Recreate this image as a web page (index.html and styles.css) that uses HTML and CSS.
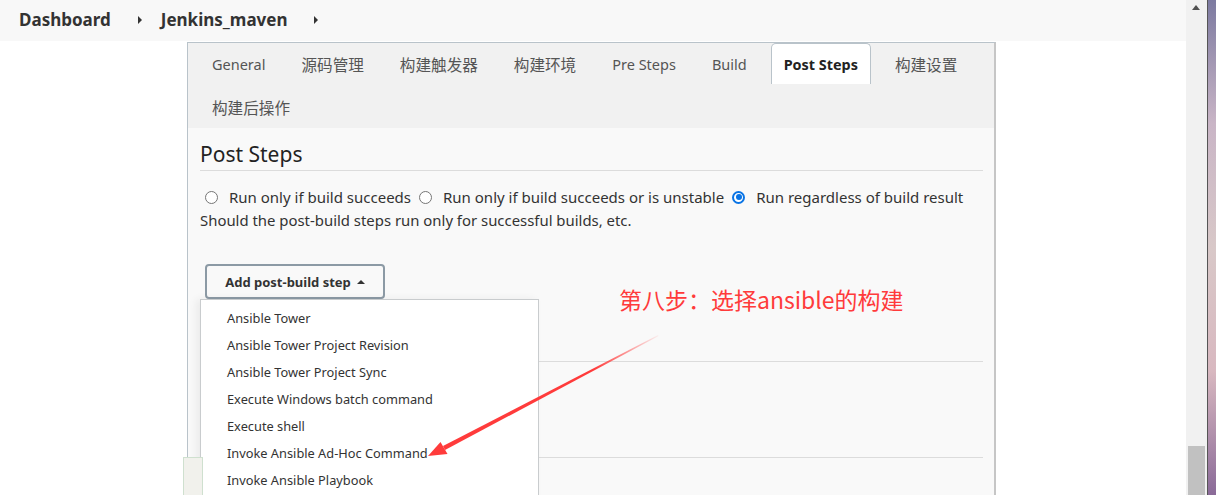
FILE: index.html
```html
<!DOCTYPE html>
<html>
<head>
<meta charset="utf-8">
<link rel="stylesheet" href="styles.css">
</head>
<body>
<div class="screen">
  <div class="main">
    <div class="header">
      <span class="crumb">Dashboard</span>
      <span class="caret"></span>
      <span class="crumb">Jenkins_maven</span>
      <span class="caret"></span>
    </div>
    <div class="body">
      <div class="panel">
        <div class="tabs">
          <div class="tab">General</div>
          <div class="tab cjk">源码管理</div>
          <div class="tab cjk">构建触发器</div>
          <div class="tab cjk">构建环境</div>
          <div class="tab">Pre Steps</div>
          <div class="tab">Build</div>
          <div class="tab active">Post Steps</div>
          <div class="tab cjk">构建设置</div>
          <div class="tab cjk">构建后操作</div>
        </div>
        <div class="content">
          <h2 class="section-title">Post Steps</h2>
          <div class="radios">
            <label class="radio"><span class="dot"></span>Run only if build succeeds</label>
            <label class="radio"><span class="dot"></span>Run only if build succeeds or is unstable</label>
            <label class="radio"><span class="dot on"></span>Run regardless of build result</label>
          </div>
          <div class="help">Should the post-build steps run only for successful builds, etc.</div>
          <div class="btn-row">
            <button class="add-btn">Add post-build step <span class="up"></span></button>
          </div>
          <div class="sep sep1"></div>
          <div class="sep sep2"></div>

          <div class="menu">
            <div class="item">Ansible Tower</div>
            <div class="item">Ansible Tower Project Revision</div>
            <div class="item">Ansible Tower Project Sync</div>
            <div class="item">Execute Windows batch command</div>
            <div class="item">Execute shell</div>
            <div class="item">Invoke Ansible Ad-Hoc Command</div>
            <div class="item">Invoke Ansible Playbook</div>
          </div>
        </div>
      </div>
      <div class="side-box"></div>
      <div class="note">第八步：选择ansible的构建</div>
      <svg class="arrow" width="260" height="140" viewBox="0 0 260 140">
        <defs>
          <linearGradient id="fade" x1="1" y1="0" x2="0" y2="1">
            <stop offset="0" stop-color="#ff3b3b" stop-opacity="0.05"/>
            <stop offset="0.3" stop-color="#ff3b3b" stop-opacity="1"/>
          </linearGradient>
        </defs>
        <polygon points="240,5 240.6,6 27,120 25,116" fill="url(#fade)"/>
        <polygon points="10,126 22.5,112 29.5,124" fill="#ff3b3b"/>
      </svg>
    </div>
  </div>
  <div class="scrollbar">
    <span class="sb-up"></span>
    <span class="sb-thumb"></span>
  </div>
  <div class="desktop"></div>
</div>
</body>
</html>
```
FILE: styles.css
```css
* { box-sizing: border-box; }
html, body { margin: 0; padding: 0; }
body {
  font-family: "Noto Sans", "Open Sans", "Noto Sans CJK SC", sans-serif;
  color: #333;
  background: #fff;
  overflow: hidden;
}
.screen { display: flex; width: 1216px; height: 495px; }
.main { flex: 1; display: flex; flex-direction: column; min-width: 0; }
.header {
  height: 41px;
  background: #f8f8f8;
  display: flex;
  align-items: center;
  padding-left: 19px;
  padding-bottom: 2px;
  flex-shrink: 0;
}
.crumb {
  font-weight: 700;
  font-size: 17px;
  color: #333;
}
.caret {
  width: 0; height: 0;
  border-top: 4px solid transparent;
  border-bottom: 4px solid transparent;
  border-left: 4px solid #333;
  margin: 0 19px 0 27px;
}
.body { position: relative; flex: 1; }
.panel {
  margin-left: 187px;
  margin-top: 1px;
  width: 809px;
  height: 460px;
  border-left: 1px solid #b9c3ca;
  border-top: 1px solid #b9c3ca;
  border-right: 2px solid #c6c6c6;
  display: flex;
  flex-direction: column;
}
.tabs {
  background: #f1f1f1;
  display: flex;
  flex-wrap: wrap;
  column-gap: 12px;
  row-gap: 2px;
  padding: 0 12px;
  height: 85px;
  align-content: flex-start;
}
.tab {
  height: 41px;
  line-height: 43px;
  padding: 0 12px;
  font-size: 14.5px;
  color: #555;
  font-family: "Noto Sans", "Noto Sans CJK SC", sans-serif;
}
.tab.cjk {
  font-family: "Noto Sans CJK SC", sans-serif;
  font-size: 15.6px;
}
.tab.active {
  background: #fff;
  border: 1px solid #b9c3ca;
  border-bottom: none;
  border-radius: 5px 5px 0 0;
  color: #222;
  font-weight: 700;
  font-size: 14.4px;
  line-height: 41px;
}
.content {
  background: #f9f9f9;
  flex: 1;
  padding: 12px 11px 0 12px;
  position: relative;
}
.section-title {
  margin: 0;
  font-size: 21px;
  font-weight: 400;
  color: #222;
  line-height: 28px;
  padding-bottom: 2px;
  border-bottom: 1px solid #dcdcdc;
}
.radios {
  display: flex;
  margin-top: 16px;
  font-size: 15px;
  line-height: 20px;
}
.radio { display: flex; align-items: center; color: #333; margin-right: 3px; }
.dot {
  width: 13px; height: 13px;
  border-radius: 50%;
  border: 1px solid #767676;
  background: #fff;
  margin: 0 11px 0 5px;
  position: relative;
}
.dot.on { border: 2px solid #0a74e5; }
.dot.on::after {
  content: "";
  position: absolute;
  left: 1.5px; top: 1.5px;
  width: 6px; height: 6px;
  border-radius: 50%;
  background: #0a74e5;
}
.help { font-size: 14.9px; line-height: 22px; color: #333; margin-top: 2px; }
.btn-row { margin-top: 33px; padding-left: 5px; }
.add-btn {
  height: 35px;
  width: 180px;
  border: 2px solid #8c9aa5;
  border-radius: 4px;
  background: #f9f9f9;
  font-family: "Noto Sans", sans-serif;
  font-weight: 700;
  font-size: 13px;
  color: #333;
  display: flex;
  align-items: center;
  justify-content: center;
  gap: 6px;
}
.up {
  width: 0; height: 0;
  border-left: 4px solid transparent;
  border-right: 4px solid transparent;
  border-bottom: 4px solid #333;
}
.sep { height: 1px; background: #dcdcdc; }
.sep1 { margin-top: 62px; }
.sep2 { margin-top: 95px; }
.menu {
  position: absolute;
  left: 12px;
  top: 171px;
  width: 339px;
  height: 210px;
  background: #fff;
  border: 1px solid #c9ccce;
  box-shadow: -4px 0 8px rgba(0,0,0,0.06);
  padding-top: 5px;
}
.item {
  height: 27px;
  line-height: 27px;
  padding-left: 26px;
  font-size: 12.8px;
  color: #333;
}
.side-box {
  position: absolute;
  left: 183px;
  top: 416px;
  width: 20px;
  height: 40px;
  border: 1px solid #cfe0cf;
  background: #f1f1ec;
}
.note {
  position: absolute;
  left: 619px;
  top: 243px;
  font-family: "Noto Sans CJK SC", sans-serif;
  font-size: 23px;
  color: #ff3b3b;
  line-height: 30px;
}
.arrow {
  position: absolute;
  left: 418px;
  top: 289px;
}
.scrollbar {
  width: 21px;
  background: #f1f1f1;
  position: relative;
  flex-shrink: 0;
}
.sb-up {
  position: absolute;
  left: 6px; top: 5px;
  width: 0; height: 0;
  border-left: 4px solid transparent;
  border-right: 4px solid transparent;
  border-bottom: 5px solid #505050;
}
.sb-thumb {
  position: absolute;
  left: 2px; top: 446px;
  width: 17px; height: 49px;
  background: #c1c1c1;
}
.desktop {
  width: 9px;
  border-left: 1px solid #555;
  background: linear-gradient(180deg, #7c7aa0 0%, #c9b5c6 25%, #d8c8c8 50%, #d8b8c0 75%, #8a6a98 100%);
}
```
